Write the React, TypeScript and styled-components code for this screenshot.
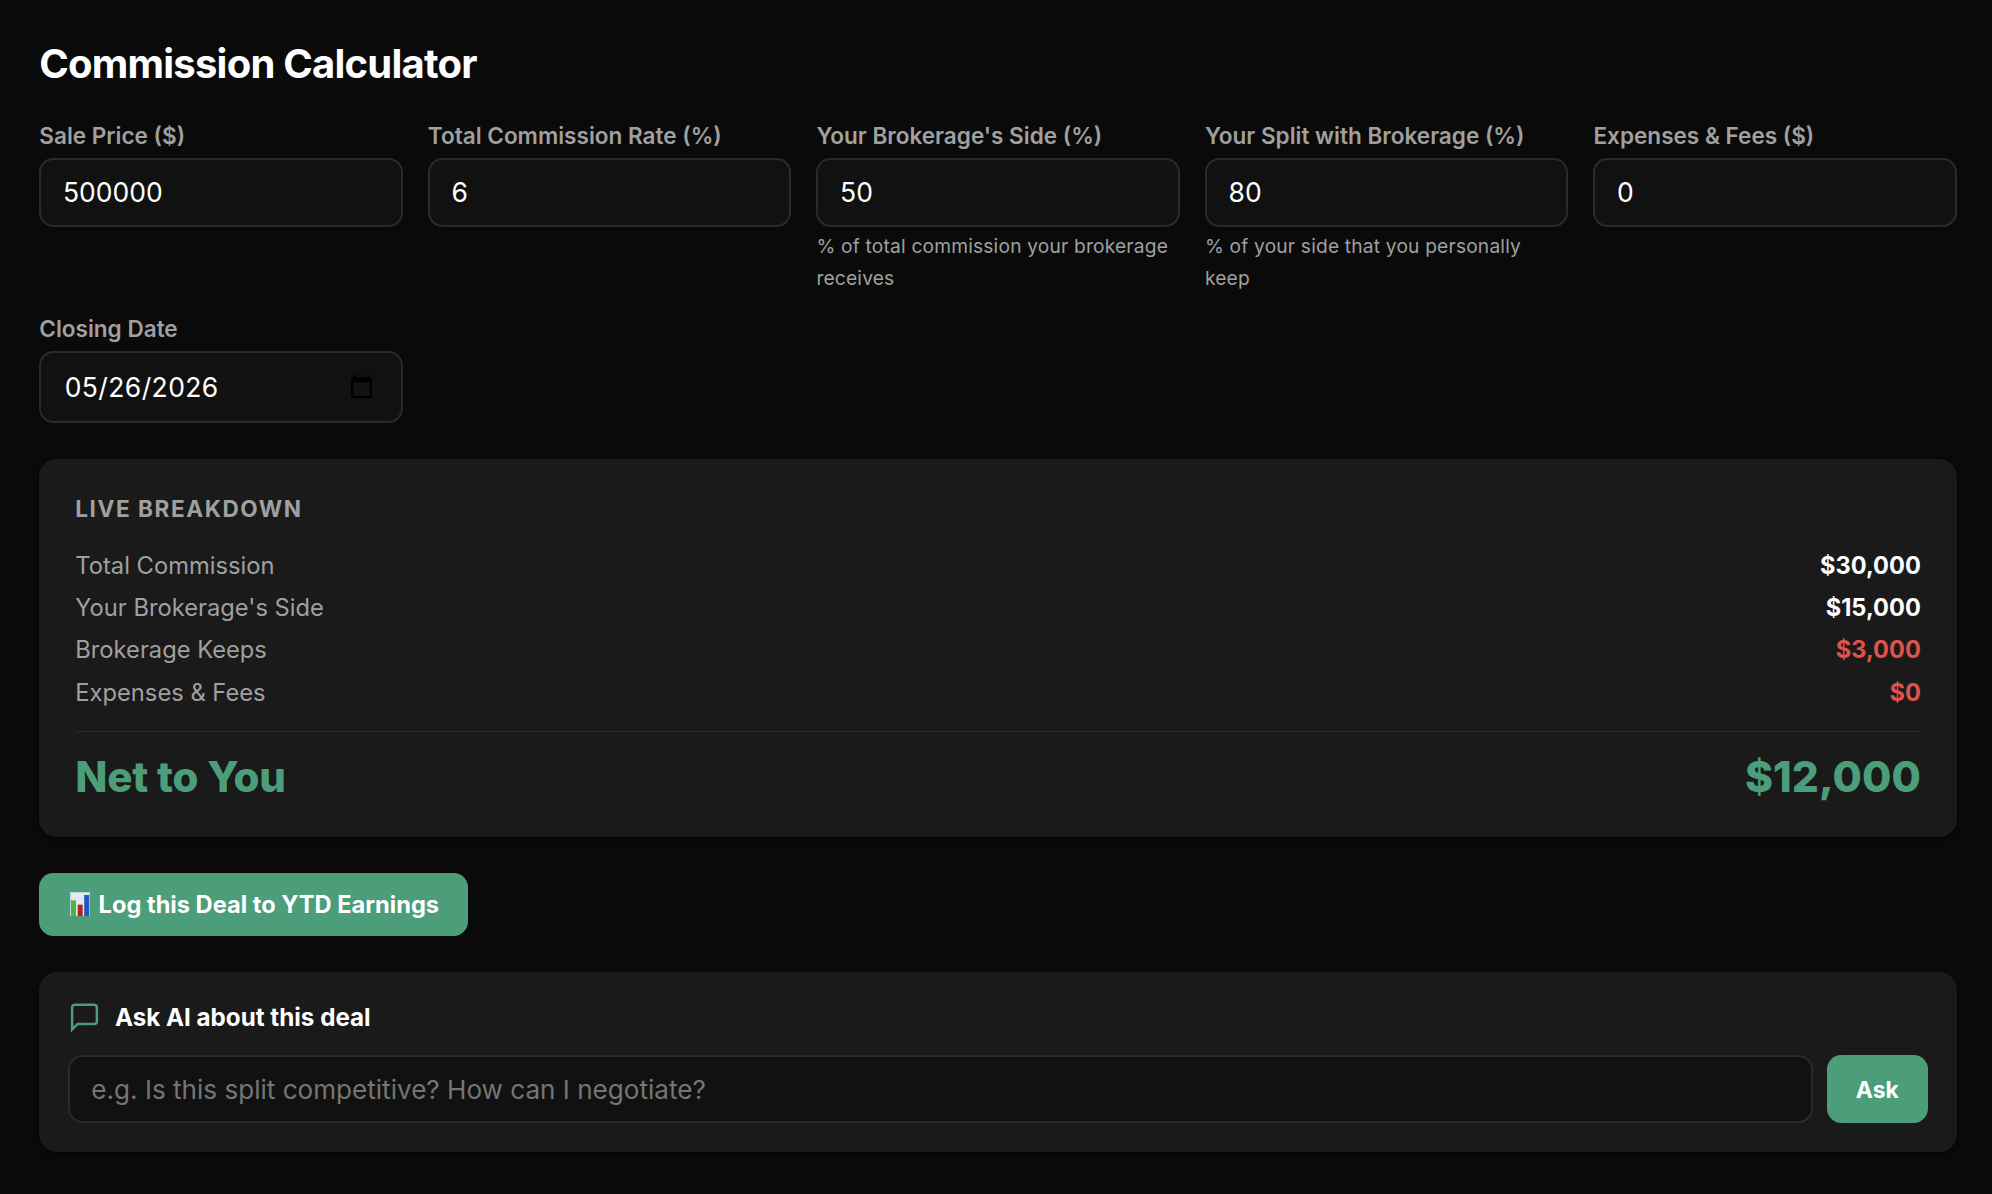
import React, { useState } from "react";
import styled, { createGlobalStyle } from "styled-components";

const GlobalStyle = createGlobalStyle`
  *, *::before, *::after { box-sizing: border-box; }
  html { background: #0a0a0a; }
  body {
    margin: 0;
    background: #0a0a0a;
    color: #fff;
    font-family: Inter, "Liberation Sans", sans-serif;
    -webkit-font-smoothing: antialiased;
  }
`;

const Page = styled.main`
  min-height: 1194px;
  padding: 40px 35.2px 42px 39.3px;
`;

const Title = styled.h1`
  margin: 0 0 33px;
  font-size: 40px;
  line-height: 48px;
  font-weight: 700;
  letter-spacing: -0.78px;
`;

const Fields = styled.div`
  display: grid;
  grid-template-columns: repeat(5, minmax(0, 1fr));
  column-gap: 25.2px;
  row-gap: 20px;
  margin-bottom: 36px;
`;

const Field = styled.label`
  display: flex;
  flex-direction: column;
`;

const Label = styled.span`
  margin-bottom: 7px;
  color: #a0a0a0;
  font-size: 22.55px;
  line-height: 30px;
  font-weight: 600;
`;

const Hint = styled.span`
  margin-top: 3px;
  color: #a0a0a0;
  font-size: 19.2px;
  line-height: 32px;
  letter-spacing: 0.18px;
`;

const Input = styled.input`
  display: block;
  width: 100%;
  height: 69px;
  padding: 0 21.6px 1px;
  border: 2px solid #2a2a2a;
  border-radius: 14.4px;
  outline: none;
  background: #111;
  color: #fff;
  font: 400 26.5px Inter, "Liberation Sans", sans-serif;
  letter-spacing: 0.05px;
`;

const DateBox = styled.span`
  display: flex;
  align-items: center;
  height: 72px;
  padding: 0 29px 0 23.4px;
  border: 2px solid #2a2a2a;
  border-radius: 14.4px;
  background: #111;
`;

const DateInput = styled.input`
  flex: 1;
  min-width: 0;
  padding: 0;
  border: 0;
  outline: none;
  background: transparent;
  color: #fff;
  font: 400 26.5px Inter, "Liberation Sans", sans-serif;
  letter-spacing: 0.4px;
`;

const Card = styled.section<{ $padding: string }>`
  padding: ${(p) => p.$padding};
  border-radius: 18px;
  background: #1a1a1a;
  box-shadow: 0 2px 5px rgba(0, 0, 0, 0.5);
`;

const CardHeading = styled.h2`
  margin: 0 0 21px;
  color: #a0a0a0;
  font-size: 22.6px;
  line-height: 30px;
  font-weight: 700;
  letter-spacing: 1.55px;
`;

const Row = styled.div`
  display: flex;
  justify-content: space-between;
  color: #a0a0a0;
  font-size: 23.72px;
  line-height: 42.2px;

  &:nth-of-type(4) {
    padding-top: 0.8px;
  }
`;

const Amount = styled.span<{ $negative?: boolean }>`
  color: ${(p) => (p.$negative ? "#e0524c" : "#fff")};
  font-size: 23.6px;
  font-weight: 700;
`;

const Total = styled.div`
  display: flex;
  justify-content: space-between;
  margin-top: 17.2px;
  padding-top: 18.6px;
  border-top: 1px solid #2a2a2a;
  color: #4c9d7a;
  font-size: 42px;
  line-height: 52px;
  font-weight: 800;
`;

const TotalLabel = styled.span`
  letter-spacing: -0.2px;
`;

const TotalValue = styled.span`
  font-size: 42.5px;
`;

const Button = styled.button<{ $width: number; $height: number }>`
  display: flex;
  align-items: center;
  justify-content: center;
  gap: 9px;
  flex: none;
  width: ${(p) => p.$width}px;
  height: ${(p) => p.$height}px;
  padding: 0 0 0 1px;
  border: 0;
  border-radius: 14.4px;
  background: #4c9d7a;
  color: #fff;
  font: 700 23.65px Inter, "Liberation Sans", sans-serif;
  white-space: nowrap;
`;

const AskButton = styled(Button)`
  padding: 2px 0 0;
  font-size: 23px;
`;

const Actions = styled.div`
  display: flex;
  margin: 36px 0;
`;

const AskHeader = styled.div`
  display: flex;
  align-items: center;
  gap: 13.6px;
  height: 33px;
  margin-bottom: 21.5px;
  font-size: 24.2px;
  line-height: 30px;
  font-weight: 700;
`;

const AskTitle = styled.span`
  padding-top: 1.5px;
`;

const AskRow = styled.div`
  display: flex;
  gap: 14px;
`;

const AskInput = styled(Input)`
  flex: 1;
  width: auto;
  height: 68px;
  padding: 1px 21.6px 0 21px;
  font-size: 26.1px;
  letter-spacing: 0;
  &::placeholder { color: #757575; opacity: 1; }
`;

const CalendarIcon = () => (
  <svg width="21" height="24" viewBox="0 0 21 24" aria-hidden="true">
    <path
      fill="#000"
      fillRule="evenodd"
      d="M2.7 0h2.6v2.2h10.4V0h2.6v2.2h.7a2 2 0 0 1 2 2v17.1a2 2 0 0 1-2 2H2a2 2 0 0 1-2-2V4.2a2 2 0 0 1 2-2h.7zM2.2 7.3V21h16.6V7.3z"
    />
  </svg>
);

const ChatIcon = () => (
  <svg width="33" height="33" viewBox="0 0 24 24" fill="none" stroke="#4c9d7a" strokeWidth="1.8" aria-hidden="true">
    <path d="M21 15.4a2 2 0 0 1-2 2H7l-4 4V5.4a2 2 0 0 1 2-2h14a2 2 0 0 1 2 2z" />
  </svg>
);

const ChartIcon = () => (
  <svg width="20" height="24" viewBox="0 0 20 24" aria-hidden="true">
    <rect width="20" height="24" fill="#c5d0dc" />
    <rect x="1" y="1" width="18" height="22.5" fill="#e4eaf3" />
    <path d="M1 6.5h18M1 12h18M1 17.5h18" stroke="#d3dbe7" strokeWidth=".6" />
    <rect x="1" y="8.3" width="5" height="15.7" fill="#4fb535" />
    <rect x="7.7" y="12.7" width="5" height="11.3" fill="#b3241c" />
    <rect x="14.2" y="3" width="5" height="21" fill="#2457bd" />
  </svg>
);

const FIELDS = [
  { label: "Sale Price ($)", value: "500000" },
  { label: "Total Commission Rate (%)", value: "6" },
  { label: "Your Brokerage's Side (%)", value: "50", hint: "% of total commission your brokerage receives" },
  { label: "Your Split with Brokerage (%)", value: "80", hint: "% of your side that you personally keep" },
  { label: "Expenses & Fees ($)", value: "0" },
];

const money = (n: number) => "$" + Math.round(n).toLocaleString("en-US");

export default function App() {
  const [values, setValues] = useState(FIELDS.map((f) => f.value));
  const [price, rate, side, split, fees] = values.map((v) => Number(v) || 0);
  const total = (price * rate) / 100;
  const brokerage = (total * side) / 100;
  const kept = brokerage * (1 - split / 100);

  return (
    <Page>
      <GlobalStyle />
      <Title>Commission Calculator</Title>
      <Fields>
        {FIELDS.map((f, i) => (
          <Field key={f.label}>
            <Label>{f.label}</Label>
            <Input
              inputMode="decimal"
              value={values[i]}
              onChange={(e) => setValues(values.map((v, j) => (j === i ? e.target.value : v)))}
            />
            {f.hint && <Hint>{f.hint}</Hint>}
          </Field>
        ))}
        <Field>
          <Label>Closing Date</Label>
          <DateBox>
            <DateInput defaultValue="05/26/2026" />
            <CalendarIcon />
          </DateBox>
        </Field>
      </Fields>

      <Card $padding="34.5px 36px 34px">
        <CardHeading>LIVE BREAKDOWN</CardHeading>
        <Row>Total Commission<Amount>{money(total)}</Amount></Row>
        <Row>Your Brokerage's Side<Amount>{money(brokerage)}</Amount></Row>
        <Row>Brokerage Keeps<Amount $negative>{money(kept)}</Amount></Row>
        <Row>Expenses &amp; Fees<Amount $negative>{money(fees)}</Amount></Row>
        <Total>
          <TotalLabel>Net to You</TotalLabel>
          <TotalValue>{money(brokerage - kept - fees)}</TotalValue>
        </Total>
      </Card>

      <Actions>
        <Button $width={429} $height={63}><ChartIcon />Log this Deal to YTD Earnings</Button>
      </Actions>

      <Card $padding="28.5px 29px 29px">
        <AskHeader><ChatIcon /><AskTitle>Ask AI about this deal</AskTitle></AskHeader>
        <AskRow>
          <AskInput placeholder="e.g. Is this split competitive? How can I negotiate?" />
          <AskButton $width={101} $height={68}>Ask</AskButton>
        </AskRow>
      </Card>
    </Page>
  );
}
